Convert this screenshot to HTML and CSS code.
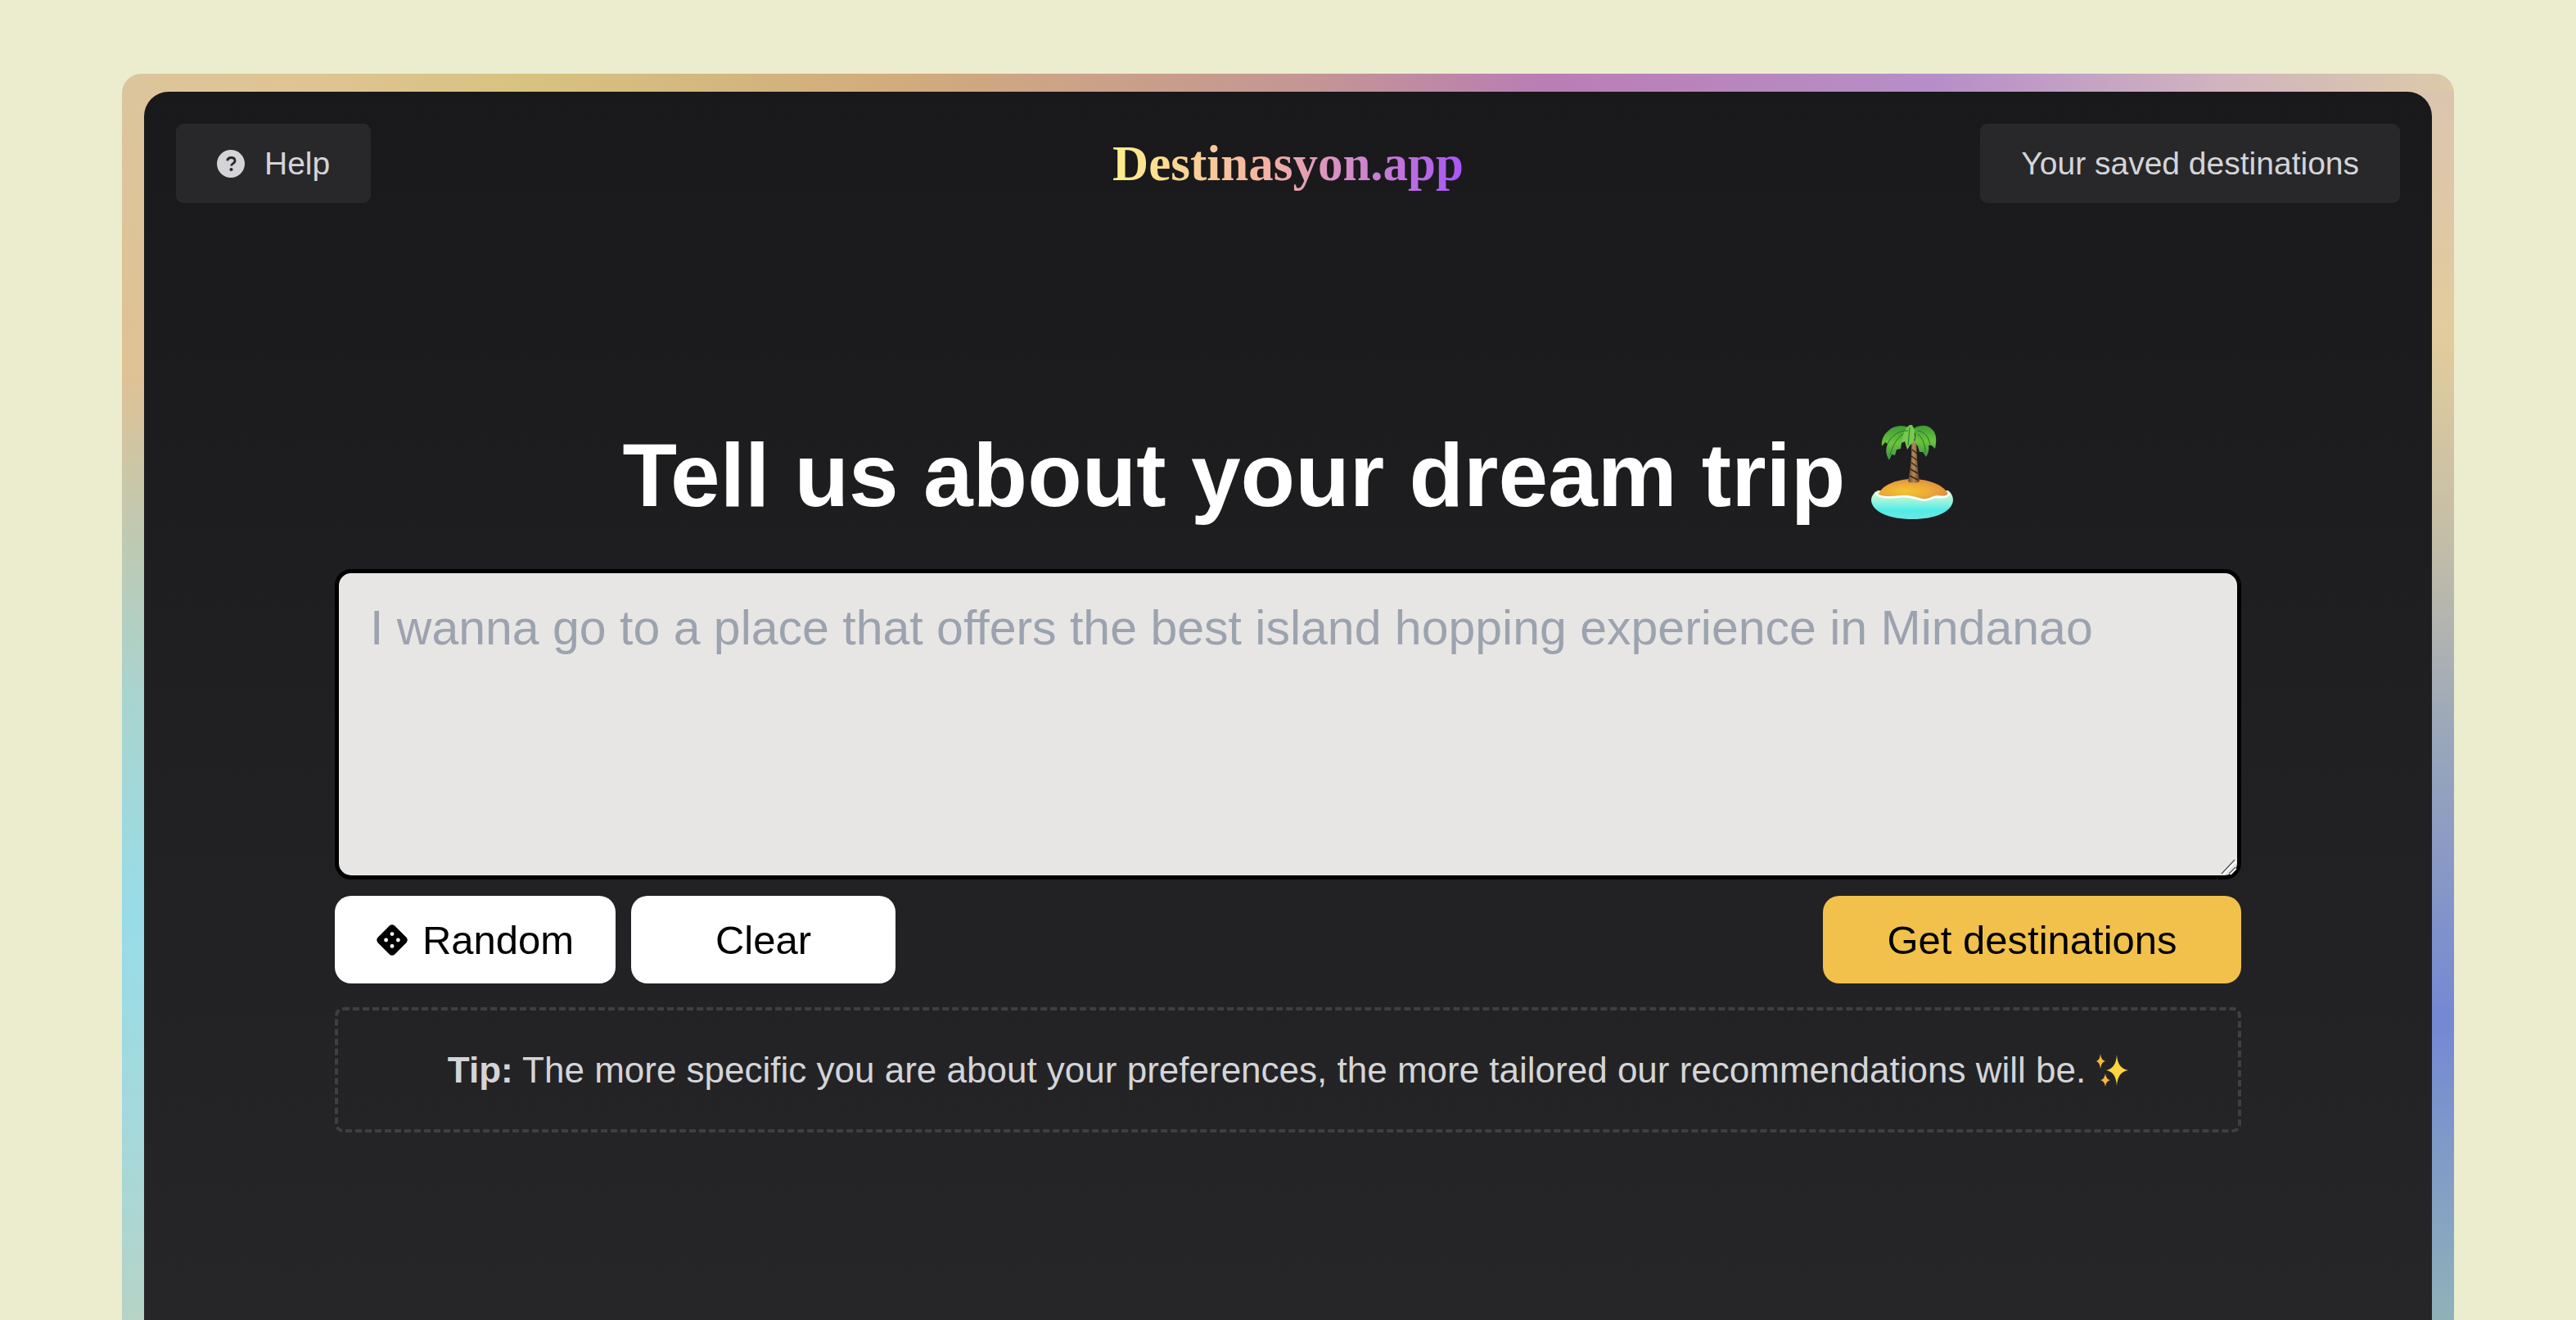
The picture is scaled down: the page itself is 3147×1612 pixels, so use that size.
FILE: index.html
```html
<!DOCTYPE html>
<html lang="en">
<head>
<meta charset="utf-8">
<meta name="viewport" content="width=device-width, initial-scale=1">
<title>Destinasyon.app</title>
<link rel="stylesheet" href="styles.css">
</head>
<body>
<div class="frame">
  <div class="panel">
    <header class="topbar">
      <div class="topbar-side">
        <button type="button" class="btn btn-quiet">
          <svg class="icon-help" viewBox="0 0 34 34" aria-hidden="true">
            <circle cx="17" cy="17" r="17" fill="#d4d4d8"/>
            <path d="M12.6 13.2c.5-2.4 2.200-3.700 4.700-3.700 2.800 0 4.700 1.500 4.700 3.800 0 1.700-.9 2.700-2.500 3.600-1.500.9-1.900 1.400-1.900 2.700" fill="none" stroke="#27272a" stroke-width="2.800"/>
            <circle cx="17.500" cy="24" r="2.100" fill="#27272a"/>
          </svg>
          <span>Help</span>
        </button>
      </div>
      <a class="logo" href="#">Destinasyon.app</a>
      <div class="topbar-side topbar-end">
        <button type="button" class="btn btn-quiet">Your saved destinations</button>
      </div>
    </header>
    <main class="content">
      <h1 class="title">
        <label for="prompt">Tell us about your dream trip</label>
        <svg class="island" viewBox="0 0 100 116" role="img" aria-label="desert island">
          <defs>
            <linearGradient id="sea" x1="0" y1="0" x2="0" y2="1">
              <stop offset="0" stop-color="#e9f3c8"/><stop offset=".35" stop-color="#a0f4dc"/><stop offset=".7" stop-color="#4fece6"/><stop offset="1" stop-color="#72e6e4"/>
            </linearGradient>
            <radialGradient id="sand" cx=".4" cy=".6" r=".7">
              <stop offset="0" stop-color="#f3c52e"/><stop offset=".5" stop-color="#eda938"/><stop offset="1" stop-color="#d98540"/>
            </radialGradient>
            <linearGradient id="trunk">
              <stop offset="0" stop-color="#65432a"/><stop offset=".5" stop-color="#b58a5b"/><stop offset="1" stop-color="#5b3b25"/>
            </linearGradient>
            <linearGradient id="leaf" x1="0" y1="0" x2="0" y2="1">
              <stop offset="0" stop-color="#3f9a35"/><stop offset=".5" stop-color="#6cc43c"/><stop offset="1" stop-color="#3e8f49"/>
            </linearGradient>
          </defs>
          <path d="M0 93C0 88 3 84 8 81L94 81C98 84 100 88 100 93C99 107 78 116 50 116S1 107 0 93Z" fill="url(#sea)"/>
          <path d="M9 86C12 75 30 67 51 67S91 76 94 86C90 90 85 86 79 87C73 88 70 93 62 91C52 88 46 86 36 87C25 88 17 90 9 86Z" fill="url(#sand)"/>
          <path d="M5 83C8 90 20 90 36 88.500C46 87 54 91 62 92.500C70 94 73 89 80 89C86 89 92 91 96 84" fill="none" stroke="#fff" stroke-width="2.500"/>
          <path d="M49 20L55 20C56 38 56 52 59 70C55 72 49 72 45 70C48 56 50 40 49 20Z" fill="url(#trunk)"/>
          <path d="M50 31l6 5M49 39l7 5M49 47l7 5M48 55l9 5M47 63l10 5" stroke="#382416" stroke-width="1.500"/>
          <path d="M50 6C40 0 28 1 21 8C15 13 12 20 13 27L17 22L20 24C18 30 17 36 22 44L25 37L29 38L31 31L36 30L37 23L43 20L42 12Z" fill="url(#leaf)"/>
          <path d="M52 5C61 0 70 1 75 7C80 12 80 21 78 30L74 26L70 26C71 31 70 35 67 40L63 34L59 34L57 27L53 22L54 13Z" fill="url(#leaf)"/>
          <path d="M47 1C41 5 38 13 38 22L41 21L44 31L48 25L51 23L53 17L53 7L50 1Z" fill="#76c94c"/>
          <path d="M45 8C35 7 24 14 20 24M57 8C65 9 71 16 72 26M47 4L45 26M57 12C64 18 66 27 66 35M39 12C31 17 26 27 23 38" fill="none" stroke="#23752c" stroke-width="1"/>
        </svg>
      </h1>
      <div class="prompt-box">
        <textarea id="prompt" class="prompt" placeholder="I wanna go to a place that offers the best island hopping experience in Mindanao"></textarea>
        <svg class="grip" viewBox="0 0 20 20" aria-hidden="true">
          <path d="M2 18L18 2M11 18L18 11" stroke="#fff" stroke-width="4"/>
          <path d="M1 18L17 1M10 18L18 10" stroke="#555" stroke-width="1.500"/>
        </svg>
      </div>
      <div class="actions">
        <button type="button" class="btn btn-white btn-random">
          <svg class="icon-dice" viewBox="0 0 36 36" aria-hidden="true">
            <path d="M15 1.500Q18-1 21 1.500L34.500 15Q37 18 34.500 21L21 34.500Q18 37 15 34.500L1.500 21Q-1 18 1.500 15Z" fill="#000"/>
            <g fill="#fff"><circle cx="18" cy="11" r="2.300"/><circle cx="11" cy="18" r="2.300"/><circle cx="25" cy="18" r="2.300"/><circle cx="18" cy="25" r="2.300"/></g>
          </svg>
          <span>Random</span>
        </button>
        <button type="button" class="btn btn-white btn-clear">Clear</button>
        <button type="button" class="btn btn-primary">Get destinations</button>
      </div>
      <p class="tip">
        <span><strong>Tip:</strong> The more specific you are about your preferences, the more tailored our recommendations will be.</span>
        <svg class="sparkles" viewBox="0 0 40 40" role="img" aria-label="sparkles">
          <path d="M26 1Q27 18 40 20Q27 22 26 39Q25 22 13 20Q25 18 26 1Z" fill="#fcd53f"/>
          <path d="M6 0Q7 8 12 9Q7 10 6 18Q5 10 1 9Q5 8 6 0ZM12 24Q13 31 18 32Q13 33 12 40Q11 33 6 32Q11 31 12 24Z" fill="#f6b73c"/>
        </svg>
      </p>
    </main>
  </div>
</div>
</body>
</html>
```
FILE: styles.css
```css
* { box-sizing: border-box; }

body {
  margin: 0;
  min-height: 100vh;
  display: flex;
  padding: 90px 149px 0;
  background: #ebedce;
  color: #fff;
  font-family: "Liberation Sans", Arial, sans-serif;
}

.frame {
  flex: 1;
  display: flex;
  padding: 22px 27px 0;
  border-radius: 24px 24px 0 0;
  background:
    linear-gradient(90deg, #dcc59c 0%, #dfc493 8%, #d7c381 17%, #d1ac7c 33%, #c39694 51%, #ba7db4 61%, #b68fc8 78%, #d0b4bf 90%, #dccaa8 100%) top / 100% 22px no-repeat,
    linear-gradient(#dcc59c 0%, #dfc295 24%, #bdcab4 38%, #a9d4cf 50%, #98dce8 68%, #a6d8da 86%, #b6d3c6 100%) left / 50% 100% no-repeat,
    linear-gradient(#dac4b0 0%, #e3cc9c 21%, #c2bda8 38%, #98a6bb 54%, #7488d4 76%, #8fb2b8 100%) right / 50% 100% no-repeat;
}

.panel {
  flex: 1;
  padding: 39px 39px 0;
  border-radius: 30px 30px 0 0;
  background: linear-gradient(#19191b, #262628);
}

.topbar { display: flex; align-items: center; }
.topbar-side { flex: 1; display: flex; }
.topbar-end { justify-content: flex-end; }

.btn {
  display: flex;
  align-items: center;
  justify-content: center;
  border: 0;
  border-radius: 20px;
  font-family: inherit;
  font-size: 49px;
  line-height: 56px;
  color: #000;
  cursor: pointer;
}

.btn-quiet {
  height: 97px;
  padding: 0 50px;
  gap: 24px;
  border-radius: 9px;
  background: #28282a;
  color: #d4d4d8;
  font-size: 39px;
}

.logo {
  font-family: "Liberation Serif", "Times New Roman", serif;
  font-size: 61px;
  font-weight: 700;
  line-height: 72px;
  text-decoration: none;
  color: transparent;
  background: linear-gradient(90deg, #fef08a, #f5b5a0 42%, #a855f7) text;
}

.icon-help { width: 34px; height: 34px; }

.content {
  display: flex;
  flex-direction: column;
  padding: 244px 194px 0;
}

.title {
  display: flex;
  align-items: center;
  justify-content: center;
  gap: 32px;
  margin: 0 0 35px;
  font-size: 109px;
  line-height: 168px;
}

.title label { padding-top: 8px; line-height: 160px; }

.island { width: 100px; height: 116px; }

.prompt-box { position: relative; display: flex; }

.prompt {
  flex: 1;
  height: 379px;
  padding: 31px 38px;
  border: 5px solid #000;
  border-radius: 20px;
  background: #e7e6e4;
  font-family: inherit;
  font-size: 59px;
  line-height: 72px;
  resize: none;
}

.prompt::placeholder { color: #9ca3af; }

.grip {
  position: absolute;
  right: 5px;
  bottom: 5px;
  width: 20px;
  height: 20px;
  pointer-events: none;
}

.actions { display: flex; gap: 19px; margin: 20px 0 29px; }

.actions .btn { height: 107px; }
.btn-white { background: #fff; }
.btn-random { width: 343px; gap: 18px; }
.btn-clear { width: 323px; }
.btn-primary { width: 511px; margin-left: auto; background: #f2c14b; }
.icon-dice { width: 38px; height: 38px; }

.tip {
  display: flex;
  align-items: center;
  justify-content: center;
  gap: 12px;
  height: 153px;
  margin: 0;
  border: 4px dashed #3f3f42;
  border-radius: 10px;
  color: #d4d4d8;
  font-size: 44px;
  line-height: 56px;
}

.sparkles { width: 40px; height: 40px; }
```
